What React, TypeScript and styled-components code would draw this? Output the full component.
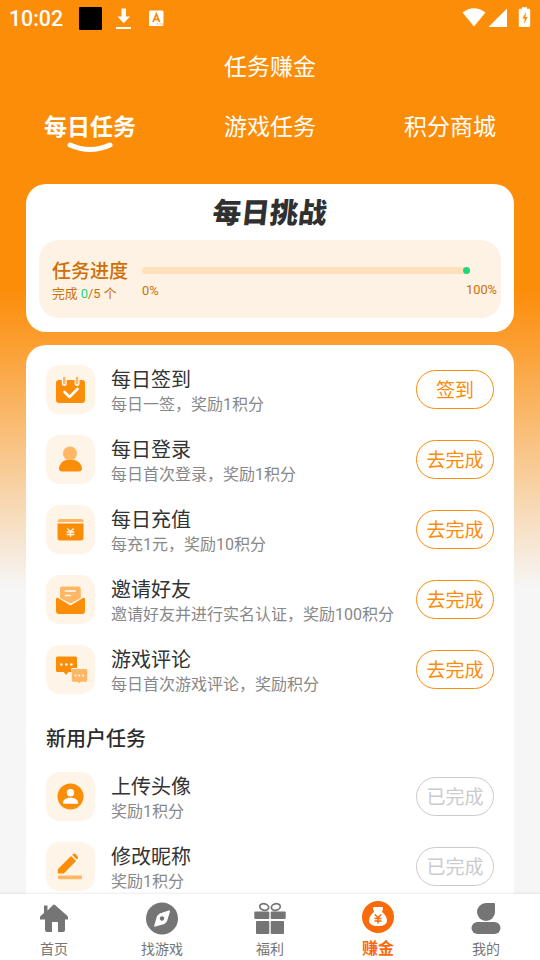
import React from "react";
import styled, { createGlobalStyle } from "styled-components";

const GlobalStyle = createGlobalStyle`
  * { box-sizing: border-box; }
  body { margin: 0; font-family: Roboto, "Noto Sans CJK SC", sans-serif; }
`;

const Screen = styled.div`
  width: 540px;
  height: 960px;
  overflow: hidden;
  display: flex;
  flex-direction: column;
  background: linear-gradient(to bottom, #fc8d09 0, #fc8d09 288px, #fb9f32 345px, #f6f6f6 588px);
`;

const StatusBar = styled.div`
  height: 36px;
  flex: none;
  display: flex;
  justify-content: space-between;
  color: #fff;
`;

const Clock = styled.span`
  width: 69px;
  padding-left: 9px;
  font-size: 21.3px;
  font-weight: 500;
  line-height: 38px;
  white-space: nowrap;
`;

const StatusGroup = styled.div`
  display: flex;
`;

const PageTitle = styled.h1`
  margin: 0;
  flex: none;
  height: 60px;
  line-height: 64px;
  text-align: center;
  font-size: 23px;
  font-weight: 400;
  color: #fff;
`;

const TopTabs = styled.div`
  flex: none;
  height: 88px;
  display: grid;
  grid-template-columns: repeat(3, 1fr);
`;

const TopTab = styled.div<{ $active?: boolean }>`
  display: flex;
  flex-direction: column;
  align-items: center;
  padding-top: 16px;
  font-size: 23px;
  line-height: 32px;
  font-weight: ${(p) => (p.$active ? 700 : 400)};
  color: #fff;
`;

const Smile = styled.svg`
  display: block;
  margin-top: -4px;
`;

const Challenge = styled.section`
  flex: none;
  height: 148px;
  margin: 0 26px;
  padding: 0 13px;
  background: #fff;
  border-radius: 20px;
`;

const ChallengeTitle = styled.h2`
  margin: 0;
  height: 56px;
  line-height: 59px;
  text-align: center;
  font-size: 28.5px;
  font-weight: 900;
  color: #303030;
  transform: skewX(-6deg);
`;

const ProgressPanel = styled.div`
  height: 78px;
  display: flex;
  padding: 0 4px 0 13px;
  background: #fef2e4;
  border-radius: 20px;
  color: #cc7006;
`;

const ProgressInfo = styled.div`
  width: 90px;
  padding-top: 20px;
`;

const ProgressLabel = styled.div`
  font-size: 19px;
  font-weight: 500;
  line-height: 23px;
`;

const ProgressCount = styled.div`
  font-size: 12.8px;
  line-height: 22px;
`;

const Done = styled.span`
  color: #1fd67c;
`;

const Meter = styled.div`
  flex: 1;
  padding-top: 27px;
`;

const Track = styled.div`
  width: 328px;
  height: 7px;
  border-radius: 4px;
  background: #fee0ba;
  display: flex;
  justify-content: flex-end;
`;

const Knob = styled.div`
  width: 7px;
  height: 7px;
  border-radius: 50%;
  background: #1fd67c;
`;

const Scale = styled.div`
  display: flex;
  justify-content: space-between;
  align-items: flex-start;
  margin-top: 7px;
  font-size: 12.8px;
  line-height: 18px;
`;

const ScaleStart = styled.span`
  padding-top: 1px;
`;

const Tasks = styled.section`
  flex: 1;
  min-height: 0;
  overflow: hidden;
  margin: 13px 26px 0;
  padding: 9px 20px 0;
  background: #fff;
  border-radius: 20px 20px 0 0;
`;

const TaskRow = styled.div`
  height: 70px;
  display: flex;
  align-items: center;
`;

const IconTile = styled.div`
  flex: none;
  width: 49px;
  height: 49px;
  margin-right: 16px;
  border-radius: 14px;
  background: #fff4e8;
  svg { display: block; }
`;

const TaskText = styled.div`
  flex: 1;
  padding-top: 6px;
  white-space: nowrap;
`;

const TaskTitle = styled.div`
  font-size: 20px;
  line-height: 26px;
  color: #333;
`;

const TaskNote = styled.div`
  font-size: 16px;
  line-height: 24px;
  color: #888;
`;

const TaskButton = styled.button<{ $done?: boolean }>`
  flex: none;
  width: 78px;
  height: 39px;
  padding: 2px 0 0;
  border: 1px solid ${(p) => (p.$done ? "#cbcbcb" : "#fc8d09")};
  border-radius: 20px;
  background: #fff;
  color: ${(p) => (p.$done ? "#cbcbcb" : "#fc8d09")};
  font-family: inherit;
  font-size: 19px;
  line-height: 35px;
`;

const SectionTitle = styled.h3`
  margin: 0;
  height: 57px;
  padding-top: 21px;
  font-size: 20px;
  line-height: 28px;
  font-weight: 500;
  color: #2c2c2c;
`;

const BottomNav = styled.nav`
  flex: none;
  height: 66px;
  display: grid;
  grid-template-columns: repeat(5, 1fr);
  background: #fff;
  box-shadow: 0 -1px 2px rgba(0, 0, 0, 0.08);
  z-index: 1;
`;

const NavItem = styled.div<{ $active?: boolean }>`
  display: flex;
  flex-direction: column;
  align-items: center;
  padding-top: ${(p) => (p.$active ? 6 : 8)}px;
  font-size: ${(p) => (p.$active ? 16 : 14)}px;
  font-weight: ${(p) => (p.$active ? 700 : 400)};
  line-height: ${(p) => (p.$active ? 28 : 26)}px;
  color: ${(p) => (p.$active ? "#f96a0a" : "#757575")};
  svg { display: block; flex: none; margin-bottom: ${(p) => (p.$active ? 1 : 2)}px; }
`;

const O = "#fc8d09";
const L = "#ffb765";

const Tile = ({ children }: { children: React.ReactNode }) => (
  <IconTile>
    <svg width="49" height="49" viewBox="0 0 49 49" fill="none">{children}</svg>
  </IconTile>
);

const CheckInIcon = () => (
  <Tile>
    <rect x="10" y="15" width="29" height="23" rx="3" fill={O} />
    <path d="M18.3 12v6.5M31 12v6.5" stroke="#fff4e8" strokeWidth="5" strokeLinecap="round" />
    <path d="M18.3 13v5M31 13v5" stroke={L} strokeWidth="2.6" strokeLinecap="round" />
    <path d="m18.5 27 5 5 8-8" stroke="#fff" strokeWidth="2.6" strokeLinecap="round" strokeLinejoin="round" />
  </Tile>
);

const LoginIcon = () => (
  <Tile>
    <circle cx="24" cy="18.5" r="7" fill={L} />
    <path d="M20 25h8c5 1 8 5 8 9 0 1.600-1.500 2.500-3.500 2.500h-16C14.500 36.500 13 35.600 13 34c0-4 3-8 7-9Z" fill={O} />
  </Tile>
);

const RechargeIcon = () => (
  <Tile>
    <path d="M11.500 17v-.5a2.500 2.500 0 0 1 2.500-2.500h21a2.500 2.500 0 0 1 2.500 2.500v.5Z" fill={L} />
    <path d="M11.500 18.500h26V33a2.500 2.500 0 0 1-2.500 2.500H14a2.500 2.500 0 0 1-2.500-2.500Z" fill={O} />
    <path d="m21.300 23.500 3.200 3 3.200-3M20.700 27h7.600M20.700 29.500h7.600M24.500 26.500v5.500" stroke="#fff4e8" strokeWidth="1.3" />
  </Tile>
);

const InviteIcon = () => (
  <Tile>
    <path d="M16.500 11.500h16a2.300 2.300 0 0 1 2.300 2.300V23L24.500 28.500 14 23v-9.200a2.300 2.300 0 0 1 2.500-2.300Z" fill={L} />
    <path d="M19.500 16h9.500M19.500 20.500h4.500" stroke="#fff" strokeWidth="1.7" strokeLinecap="round" />
    <path d="M10 24.500c0-1.500 1-2.200 2.400-1.300l12.100 7.300 12.100-7.300c1.400-.9 2.400-.2 2.400 1.300V36a3 3 0 0 1-3 3H13a3 3 0 0 1-3-3Z" fill={O} />
  </Tile>
);

const CommentIcon = () => (
  <Tile>
    <path d="M11.500 11.500h18a1.500 1.500 0 0 1 1.500 1.500v10h-5.500v4h-3l-2.300 3-2.600-3h-6.100A1.500 1.500 0 0 1 10 25.500V13a1.500 1.500 0 0 1 1.500-1.500Z" fill={O} />
    <path d="M27 24h13a1.200 1.200 0 0 1 1.200 1.200v10.300a1.200 1.200 0 0 1-1.200 1.200h-5.200l-1.600 1.600-1.500-1.600H27a1.200 1.200 0 0 1-1.200-1.200V25.200A1.200 1.200 0 0 1 27 24Z" fill={L} />
    <g fill="#fff">
      <circle cx="15.3" cy="19.5" r="1.3" /><circle cx="20.3" cy="19.5" r="1.3" /><circle cx="25.3" cy="19.5" r="1.3" />
      <circle cx="29.5" cy="30.5" r="1" /><circle cx="33.3" cy="30.5" r="1" /><circle cx="37.1" cy="30.5" r="1" />
    </g>
  </Tile>
);

const AvatarIcon = () => (
  <Tile>
    <circle cx="24.5" cy="24.5" r="13" fill={O} />
    <circle cx="24.5" cy="20.8" r="3.7" fill="#fff" />
    <path d="M17 31.700v-1.200c0-3 3.500-4.800 7.500-4.800s7.500 1.800 7.500 4.800v1.200Z" fill="#fff" />
  </Tile>
);

const RenameIcon = () => (
  <Tile>
    <path d="m12.500 26.500 12.500-12.500 5 5L17.800 31.500h-6v-3q0-1.300.7-2Z" fill={O} />
    <path d="m26.200 12.800.6-.6c.8-.8 2.100-.8 2.900 0l1.700 1.700c.8.8.8 2.100 0 2.900l-.6.6Z" fill={O} />
    <rect x="12" y="33.5" width="24" height="3.8" rx="1" fill={L} />
  </Tile>
);

const HomeIcon = () => (
  <svg width="32" height="32" viewBox="0 0 32 32" fill="#757575">
    <path d="M6 3.500h3.500v5L15 3q1-1 2 0l12.500 11q.7.700.5 3.500h-3V28q0 2-2 2h-5V20h-6v10H9q-2 0-2-2V17.500H2q-.2-2.800.5-3.500L6 11Z" />
  </svg>
);

const CompassIcon = () => (
  <svg width="32" height="33" viewBox="0 0 32 33" fill="#757575">
    <circle cx="16" cy="16.5" r="16" />
    <path d="M22.700 8.600q1.800-.5 1.200 1.300l-3 9.500-2.500 2.500-9 2.700q-1.600.4-1.100-1.200l2.700-9.300 2.700-2.700Z" fill="#fff" />
    <circle cx="16" cy="16.5" r="2.2" />
  </svg>
);

const CompassItem = styled(NavItem)`
  svg { margin-bottom: 1px; }
`;

const GiftIcon = () => (
  <svg width="32" height="32" viewBox="0 0 32 32" fill="#757575">
    <g fill="none" stroke="#757575" strokeWidth="1.7">
      <ellipse cx="10.2" cy="5" rx="4.5" ry="3.2" transform="rotate(13 10.2 5)" />
      <ellipse cx="21.8" cy="5" rx="4.5" ry="3.2" transform="rotate(-13 21.8 5)" />
    </g>
    <rect x="0.3" y="9.5" width="15" height="7.5" rx="1" />
    <rect x="16.7" y="9.5" width="15" height="7.5" rx="1" />
    <rect x="2" y="19" width="13.3" height="13" rx="1" />
    <rect x="16.7" y="19" width="13.3" height="13" rx="1" />
  </svg>
);

const MoneyIcon = () => (
  <svg width="34" height="34" viewBox="0 0 34 34">
    <circle cx="17" cy="17" r="16" fill="#f96a0a" />
    <path d="M13 7h8q1.300.3 1 1.700L21 12c3 2 5 5.500 5 8.500 0 3.500-3 5.500-9 5.500s-9-2-9-5.500c0-3 2-6.500 5-8.500l-1-3.300Q11.700 7.300 13 7Z" fill="#fff" />
    <path d="m13.800 14.500 3.200 3.300 3.200-3.300M13.500 18.500h7M13.500 21h7M17 18v5.500" fill="none" stroke="#f96a0a" strokeWidth="1.5" />
  </svg>
);

const MeIcon = () => (
  <svg width="32" height="32" viewBox="0 0 32 32" fill="#757575">
    <path d="M16 1h8q1 0 1 1v8a9 9 0 1 1-9-9Z" />
    <rect x="1.5" y="20" width="29" height="12" rx="6" />
  </svg>
);

const daily = [
  { icon: <CheckInIcon />, title: "每日签到", note: "每日一签，奖励1积分", action: "签到" },
  { icon: <LoginIcon />, title: "每日登录", note: "每日首次登录，奖励1积分", action: "去完成" },
  { icon: <RechargeIcon />, title: "每日充值", note: "每充1元，奖励10积分", action: "去完成" },
  { icon: <InviteIcon />, title: "邀请好友", note: "邀请好友并进行实名认证，奖励100积分", action: "去完成" },
  { icon: <CommentIcon />, title: "游戏评论", note: "每日首次游戏评论，奖励积分", action: "去完成" },
];

const newcomer = [
  { icon: <AvatarIcon />, title: "上传头像", note: "奖励1积分", action: "已完成" },
  { icon: <RenameIcon />, title: "修改昵称", note: "奖励1积分", action: "已完成" },
];

const Task = ({ task, done }: { task: (typeof daily)[number]; done?: boolean }) => (
  <TaskRow>
    {task.icon}
    <TaskText>
      <TaskTitle>{task.title}</TaskTitle>
      <TaskNote>{task.note}</TaskNote>
    </TaskText>
    <TaskButton $done={done}>{task.action}</TaskButton>
  </TaskRow>
);

export default function App() {
  return (
    <>
      <GlobalStyle />
      <Screen>
        <StatusBar>
          <StatusGroup>
            <Clock>10:02</Clock>
            <svg width="110" height="36" viewBox="69 0 110 36" fill="#fff">
              <rect x="79" y="7" width="23" height="23" rx="1" fill="#000" />
              <path d="M121.500 8.500h4.500v8h4l-6.300 6.800-6.200-6.800h4ZM116 27h15v2h-15Z" />
              <rect x="149" y="10.5" width="14.5" height="15.5" rx="1.5" />
              <path d="m153 22 3.300-8 3.300 8M154.200 19.300h4.200" fill="none" stroke={O} strokeWidth="1.8" />
              <path d="M157 24h1.200M159.500 24h1.200M162 24h1.200" stroke={O} strokeWidth="1.2" />
            </svg>
          </StatusGroup>
          <svg width="80" height="36" viewBox="460 0 80 36" fill="#fff">
            <path d="M462.500 12.500Q474 4 485.500 12.500L474 26.500Z" />
            <path d="M507 8.500V27h-18.500Z" />
            <path d="M522 7.300h5v1.500h2q1.200 0 1.200 1.200v15.800q0 1.200-1.200 1.200h-9q-1.200 0-1.200-1.200V10q0-1.200 1.200-1.200h2Z" />
            <path d="m526 12-3.600 6.500h2.300l-.7 5.500 3.700-7h-2.300Z" fill={O} />
          </svg>
        </StatusBar>
        <PageTitle>任务赚金</PageTitle>
        <TopTabs>
          <TopTab $active>
            每日任务
            <Smile width="48" height="14" viewBox="0 0 48 14" fill="none">
              <path d="M4 5q20 9 40 0" stroke="#fff" strokeWidth="5" strokeLinecap="round" />
            </Smile>
          </TopTab>
          <TopTab>游戏任务</TopTab>
          <TopTab>积分商城</TopTab>
        </TopTabs>
        <Challenge>
          <ChallengeTitle>每日挑战</ChallengeTitle>
          <ProgressPanel>
            <ProgressInfo>
              <ProgressLabel>任务进度</ProgressLabel>
              <ProgressCount>完成 <Done>0</Done>/5 个</ProgressCount>
            </ProgressInfo>
            <Meter>
              <Track><Knob /></Track>
              <Scale><ScaleStart>0%</ScaleStart><span>100%</span></Scale>
            </Meter>
          </ProgressPanel>
        </Challenge>
        <Tasks>
          {daily.map((t) => <Task key={t.title} task={t} />)}
          <SectionTitle>新用户任务</SectionTitle>
          {newcomer.map((t) => <Task key={t.title} task={t} done />)}
        </Tasks>
        <BottomNav>
          <NavItem><HomeIcon />首页</NavItem>
          <CompassItem><CompassIcon />找游戏</CompassItem>
          <NavItem><GiftIcon />福利</NavItem>
          <NavItem $active><MoneyIcon />赚金</NavItem>
          <NavItem><MeIcon />我的</NavItem>
        </BottomNav>
      </Screen>
    </>
  );
}
